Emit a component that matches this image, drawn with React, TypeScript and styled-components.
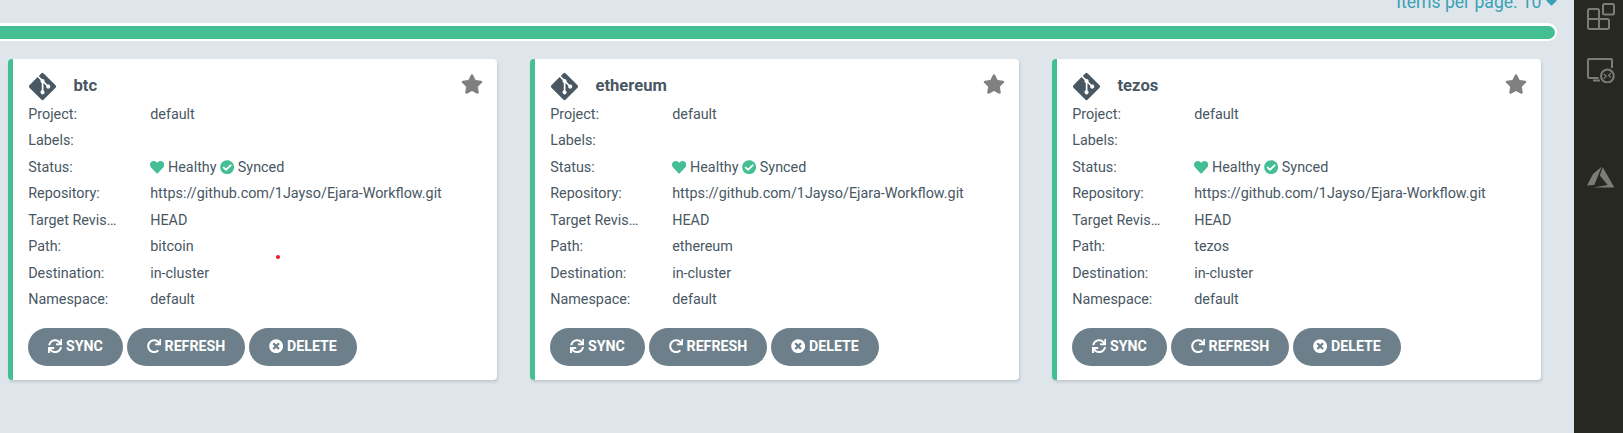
import React from 'react';
import styled, { createGlobalStyle } from 'styled-components';
import { FaHeart, FaCheckCircle, FaStar, FaTimesCircle, FaGitAlt, FaCaretDown, FaSync, FaRedo } from 'react-icons/fa';

const GlobalStyle = createGlobalStyle`
  * { box-sizing: border-box; }
  body { margin: 0; background: #dee6eb; font-family: Roboto, "Liberation Sans", sans-serif; overflow: hidden; }
`;

const Page = styled.div`
  display: flex;
  width: 1623px;
  height: 433px;
  overflow: hidden;
`;

const Main = styled.main`
  width: 1574px;
  height: 433px;
  background: #dee6eb;
`;

const Pager = styled.div`
  display: flex;
  justify-content: flex-end;
  align-items: center;
  height: 23px;
  padding: 0 17px 20px 0;
  color: #3ba1b6;
  font-size: 17.6px;
  line-height: 20px;
  white-space: nowrap;
  gap: 4.5px;
  svg { width: 11px; height: 18px; }
`;

const HealthBar = styled.div`
  width: 1557px;
  height: 18px;
  padding: 3px 2px 2px 0;
  border-radius: 0 9px 9px 0;
  background: #fff;
`;

const HealthFill = styled.div`
  height: 13px;
  border-radius: 0 7px 7px 0;
  background: #44be93;
`;

const Cards = styled.div`
  display: grid;
  grid-template-columns: repeat(3, 489px);
  gap: 33px;
  padding: 18px 0 0 8px;
`;

const Card = styled.article`
  position: relative;
  height: 321px;
  padding: 14px 14px 0 15px;
  border-left: 5px solid #44be93;
  border-radius: 4px;
  background: #fff;
  box-shadow: 1px 2px 3px rgba(0, 0, 0, 0.13);
  color: #495763;
`;

const CardHeader = styled.header`
  display: flex;
  height: 29px;
`;

const GitMark = styled(FaGitAlt)`
  width: 31px;
  height: 31px;
  margin: -2px 0 0 -1px;
  color: #495763;
  flex: none;
`;

const Title = styled.h2`
  flex: 1;
  margin: 0 0 0 15.5px;
  font-size: 16.6px;
  line-height: 25px;
  font-weight: 700;
`;

const Star = styled(FaStar)`
  width: 22px;
  height: 20px;
  margin-top: 1px;
  color: #808080;
`;

const Row = styled.div`
  display: grid;
  grid-template-columns: 90px 1fr;
  column-gap: 32px;
  height: 26.43px;
  padding-left: 0.2px;
  font-size: 14.36px;
  line-height: 26.43px;
`;

const Label = styled.span`
  overflow: hidden;
  text-overflow: ellipsis;
  white-space: nowrap;
`;

const Value = styled.span`
  display: flex;
  align-items: center;
  white-space: nowrap;
`;

const StatusItem = styled.span`
  display: flex;
  align-items: center;
  gap: 3.5px;
  margin-right: 3.5px;
  svg { color: #44be93; width: 14.3px; height: 14.3px; margin-bottom: 2px; }
`;

const Actions = styled.div`
  display: flex;
  gap: 4px;
  padding-top: 14.5px;
`;

const Button = styled.button<{ $width: number }>`
  display: flex;
  align-items: center;
  justify-content: center;
  gap: 3.5px;
  width: ${p => p.$width}px;
  height: 38px;
  padding: 0 0 2px;
  border: 0;
  border-radius: 19px;
  background: #6d7f8b;
  color: #fff;
  font: 700 14.2px Roboto, sans-serif;
  svg { width: 14.3px; height: 14.3px; }
`;

const Pointer = styled.i`
  position: absolute;
  left: 262.5px;
  top: 195.5px;
  width: 4.5px;
  height: 4.5px;
  border-radius: 50%;
  background: #ed1c24;
`;

const ActivityBar = styled.aside`
  display: flex;
  flex-direction: column;
  width: 49px;
  padding: 3px 0 0 13px;
  background: #272822;
  color: #7b7c77;
`;

const ActivityIcon = styled.svg<{ $gap: number }>`
  flex: none;
  margin-bottom: ${p => p.$gap}px;
  fill: none;
  stroke: currentColor;
  stroke-width: 2;
`;

const apps = [
  { name: 'btc', path: 'bitcoin', pointer: true },
  { name: 'ethereum', path: 'ethereum', pointer: false },
  { name: 'tezos', path: 'tezos', pointer: false },
];

function AppCard({ name, path, pointer }: { name: string; path: string; pointer: boolean }) {
  const rows: [string, React.ReactNode][] = [
    ['Project:', 'default'],
    ['Labels:', ''],
    ['Status:', <><StatusItem><FaHeart />Healthy</StatusItem><StatusItem><FaCheckCircle />Synced</StatusItem></>],
    ['Repository:', 'https://github.com/1Jayso/Ejara-Workflow.git'],
    ['Target Revis…', 'HEAD'],
    ['Path:', path],
    ['Destination:', 'in-cluster'],
    ['Namespace:', 'default'],
  ];
  return (
    <Card>
      <CardHeader><GitMark /><Title>{name}</Title><Star /></CardHeader>
      {rows.map(([label, value]) => <Row key={label}><Label>{label}</Label><Value>{value}</Value></Row>)}
      <Actions>
        <Button $width={95}><FaSync />SYNC</Button>
        <Button $width={118}><FaRedo />REFRESH</Button>
        <Button $width={108}><FaTimesCircle />DELETE</Button>
      </Actions>
      {pointer && <Pointer />}
    </Card>
  );
}

export default function App() {
  return (
    <Page>
      <GlobalStyle />
      <Main>
        <Pager>Items per page: 10 <FaCaretDown /></Pager>
        <HealthBar><HealthFill /></HealthBar>
        <Cards>{apps.map(app => <AppCard key={app.name} {...app} />)}</Cards>
      </Main>
      <ActivityBar>
        <ActivityIcon $gap={28} width="28" height="27" viewBox="0 0 28 27">
          <rect x="16" y="1" width="11" height="10.5" rx="1.5" />
          <path d="M12 16V7.5A1.5 1.5 0 0 0 10.5 6h-8A1.5 1.5 0 0 0 1 7.5v17A1.5 1.5 0 0 0 2.5 26h18a1.5 1.5 0 0 0 1.5-1.5v-7a1.5 1.5 0 0 0-1.5-1.5H1M12 16v10" />
        </ActivityIcon>
        <ActivityIcon $gap={83} width="28" height="25" viewBox="0 0 28 25">
          <path d="M25 10V2a1 1 0 0 0-1-1H2a1 1 0 0 0-1 1v17a1 1 0 0 0 1 1h9.500M6 22.500h7" />
          <circle cx="20.4" cy="18" r="6.4" />
          <path strokeWidth="1.3" d="m16.8 16 2.4 2.3-2.4 2.3M23.9 15.2l-2.3 2.2 2.3 2.2" />
        </ActivityIcon>
        <ActivityIcon $gap={0} width="28" height="22" viewBox="0 0 28 22">
          <path fill="currentColor" stroke="none" d="M0 19.4 6 8 14.7.7 7.3 18.9ZM15.7 1.3 27.4 21.5H6.5L20.7 19 12.8 9.6Z" />
        </ActivityIcon>
      </ActivityBar>
    </Page>
  );
}
